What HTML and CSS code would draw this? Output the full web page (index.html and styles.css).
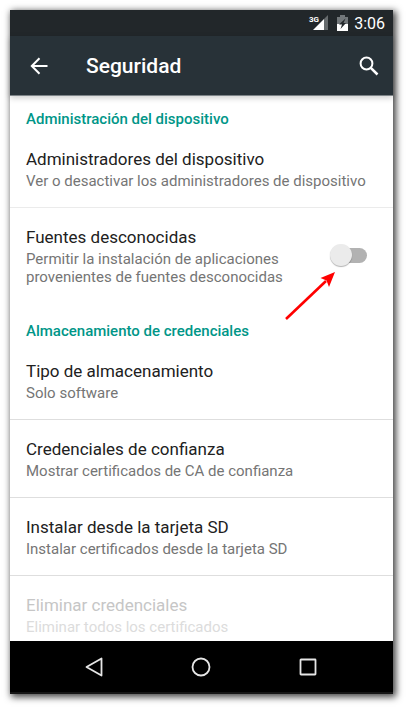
FILE: index.html
```
<!DOCTYPE html>
<html lang="es">
<head>
<meta charset="utf-8">
<meta name="viewport" content="width=device-width, initial-scale=1">
<title>Seguridad</title>
<link rel="stylesheet" href="styles.css">
</head>
<body>
<div class="phone">
  <div class="status">
    <svg class="signal" width="19" height="16" viewBox="0 0 19 16" aria-hidden="true">
      <path d="M4 15 15 4V15z" fill="#fff"/>
      <path d="M15 4 19 0V15H15z" fill="#666b6d"/>
      <text class="network" x="0" y="7">3G</text>
    </svg>
    <svg class="battery" width="11" height="16" viewBox="0 0 11 16" aria-hidden="true">
      <path d="M0 2H3V0H8V2H11V9H0z" fill="#72777a"/>
      <path d="M0 9H11V16H0z" fill="#fff"/>
      <path d="M8.500 3.500 2 9.500H5L3.500 14 9 8H6.500z" fill="#22272a"/>
    </svg>
    <span>3:06</span>
  </div>
  <header class="bar">
    <button class="icon-button" aria-label="Atrás">
      <svg width="18" height="18" viewBox="0 0 18 18"><path d="M17.500 9H2M9.500 1.300 1.800 9 9.500 16.700" fill="none" stroke="#fff" stroke-width="2"/></svg>
    </button>
    <h1>Seguridad</h1>
    <button class="icon-button" aria-label="Buscar">
      <svg width="20" height="20" viewBox="0 0 20 20"><circle cx="7.500" cy="7.500" r="5.900" fill="none" stroke="#fff" stroke-width="2"/><path d="M11.800 11.800 18.500 18.500" fill="none" stroke="#fff" stroke-width="2.500"/></svg>
    </button>
  </header>
  <main class="settings">
    <section class="administration">
      <h2>Administración del dispositivo</h2>
      <div class="row divided">
        <h3>Administradores del dispositivo</h3>
        <p>Ver o desactivar los administradores de dispositivo</p>
      </div>
      <div class="row with-switch">
        <label for="unknown">
          <span class="label-title">Fuentes desconocidas</span>
          <span class="label-text">Permitir la instalación de aplicaciones provenientes de fuentes desconocidas</span>
        </label>
        <div class="switch-box">
          <input class="switch" type="checkbox" role="switch" id="unknown">
          <svg class="pointer" width="52" height="52" viewBox="0 0 52 52" aria-hidden="true">
            <path d="M2 49 42 11" stroke="#f00" stroke-width="2.600" fill="none"/>
            <path d="M51 2 45 17 42.500 10.500 36.500 8z" fill="#f00"/>
          </svg>
        </div>
      </div>
    </section>
    <section class="credentials">
      <h2>Almacenamiento de credenciales</h2>
      <div class="row divided">
        <h3>Tipo de almacenamiento</h3>
        <p>Solo software</p>
      </div>
      <div class="row divided">
        <h3>Credenciales de confianza</h3>
        <p>Mostrar certificados de CA de confianza</p>
      </div>
      <div class="row divided">
        <h3>Instalar desde la tarjeta SD</h3>
        <p>Instalar certificados desde la tarjeta SD</p>
      </div>
      <div class="row disabled">
        <h3>Eliminar credenciales</h3>
        <p>Eliminar todos los certificados</p>
      </div>
    </section>
  </main>
  <nav class="nav">
    <button aria-label="Atrás"><svg width="20" height="20" viewBox="0 0 20 20"><path d="M17.500 1.500V18.500L2.500 10z" fill="none" stroke="#e6e6e6" stroke-width="1.800" stroke-linejoin="round"/></svg></button>
    <button aria-label="Inicio"><svg width="20" height="20" viewBox="0 0 20 20"><circle cx="10" cy="10" r="8.500" fill="none" stroke="#e6e6e6" stroke-width="1.800"/></svg></button>
    <button aria-label="Recientes"><svg width="20" height="20" viewBox="0 0 20 20"><rect x="2.500" y="2.500" width="15" height="15" rx=".5" fill="none" stroke="#e6e6e6" stroke-width="1.800"/></svg></button>
  </nav>
</div>
</body>
</html>
```
FILE: styles.css
```
* { box-sizing: border-box; }
body {
  margin: 0;
  padding: 10px 16px 16px 10px;
  height: 100vh;
  background: #fff;
  font-family: Roboto, "Liberation Sans", sans-serif;
  color: #212121;
}
h1, h2, h3, p { margin: 0; }
button {
  display: flex;
  align-items: center;
  justify-content: center;
  padding: 0;
  border: 0;
  background: none;
}
.phone {
  display: flex;
  flex-direction: column;
  height: 100%;
  background: #fff;
  box-shadow: 2px 2px 7px 1px rgba(0, 0, 0, .75);
}
.status {
  display: flex;
  align-items: center;
  justify-content: flex-end;
  flex: none;
  height: 26px;
  padding-right: 8px;
  background: #22272a;
  color: #fff;
  font-size: 16px;
}
.signal { margin-right: 9px; overflow: visible; }
.network { fill: #fff; font-size: 8px; font-weight: 700; }
.battery { margin-right: 6px; }
.bar {
  display: flex;
  align-items: center;
  flex: none;
  height: 60px;
  padding: 0 14px 0 20px;
  border-bottom: 1px solid #7d8488;
  background: #283238;
  color: #fff;
  box-shadow: 0 2px 6px rgba(0, 0, 0, .2);
  z-index: 1;
}
.bar h1 {
  flex: 1;
  margin-left: 38px;
  font-size: 21px;
  font-weight: 500;
}
.settings {
  flex: 1;
  min-height: 0;
  overflow: hidden;
}
h2 {
  padding: 14px 16px 2px;
  color: #009688;
  font-size: 15px;
  font-weight: 500;
  line-height: 18px;
}
.credentials h2 { padding-top: 19px; }
.row { padding: 19px 16px 17px; }
.divided { border-bottom: 1px solid #dedede; }
.administration .divided { border-bottom-color: #ebebeb; }
h3, .label-title {
  display: block;
  margin-bottom: 2px;
  font-size: 17px;
  font-weight: 400;
  line-height: 21px;
}
.row p, .label-text {
  display: block;
  color: #757575;
  font-size: 15px;
  line-height: 18px;
}
.disabled h3 { color: #c6c6c6; }
.disabled p { color: #dcdcdc; }
.with-switch {
  display: flex;
  align-items: center;
  justify-content: space-between;
  padding-right: 26px;
}
.with-switch label { flex: 0 1 270px; }
.switch-box {
  position: relative;
  display: flex;
  flex: none;
  margin-bottom: 2px;
}
.switch {
  position: relative;
  width: 36px;
  height: 15px;
  margin: 0;
  appearance: none;
  border-radius: 8px;
  background: #b2b2b2;
}
.switch::before {
  content: "";
  position: absolute;
  top: -4px;
  left: -1px;
  width: 22px;
  height: 22px;
  border-radius: 50%;
  background: #ebebeb;
  box-shadow: 0 1px 1px rgba(0, 0, 0, .3);
}
.pointer {
  position: absolute;
  top: 22px;
  right: 31px;
}
.nav {
  display: flex;
  align-items: center;
  justify-content: center;
  gap: 87px;
  flex: none;
  height: 53px;
  padding-right: 1px;
  border-bottom: 2px solid #151515;
  background: #000;
}
```
